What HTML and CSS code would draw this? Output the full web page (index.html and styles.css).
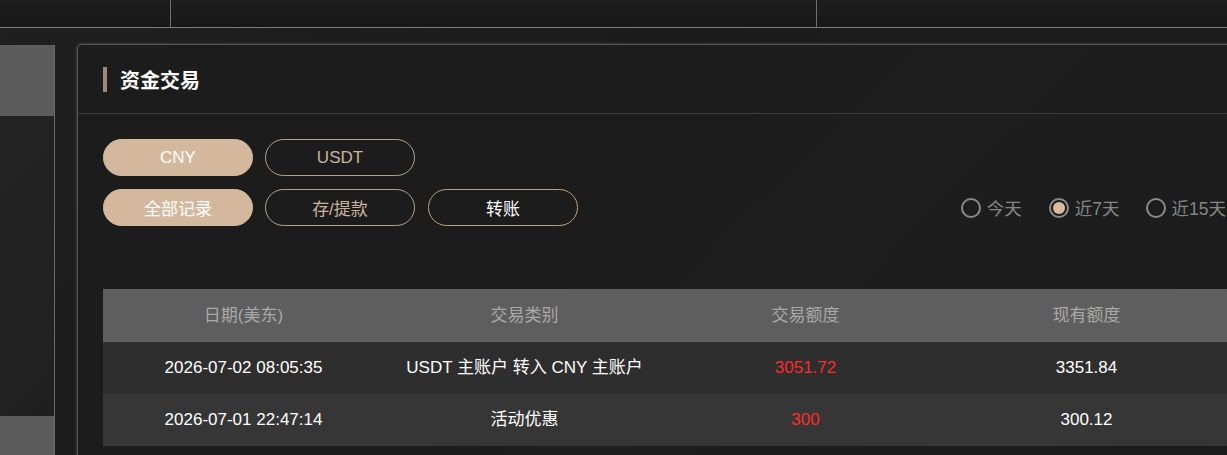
FILE: index.html
```html
<!DOCTYPE html>
<html lang="zh-CN">
<head>
<meta charset="utf-8">
<title>资金交易</title>
<link rel="stylesheet" href="styles.css">
</head>
<body>
<div class="topbar">
  <div class="top-cell top-cell-a"></div>
  <div class="top-cell top-cell-b"></div>
  <div class="top-cell top-cell-c"></div>
</div>
<div class="main">
  <aside class="sidebar">
    <div class="side-block"></div>
    <div class="side-body"></div>
    <div class="side-block side-block-bottom"></div>
  </aside>
  <section class="panel">
    <header class="panel-head">
      <span class="accent"></span>
      <h1 class="panel-title">资金交易</h1>
    </header>
    <div class="panel-body">
      <div class="btn-row">
        <button class="pill pill-active">CNY</button>
        <button class="pill">USDT</button>
      </div>
      <div class="btn-row btn-row-2">
        <div class="pill-group">
          <button class="pill pill-active">全部记录</button>
          <button class="pill">存/提款</button>
          <button class="pill pill-white">转账</button>
        </div>
        <div class="radios">
          <label class="radio"><span class="dot"></span>今天</label>
          <label class="radio radio-on"><span class="dot"></span>近7天</label>
          <label class="radio"><span class="dot"></span>近15天</label>
        </div>
      </div>
      <table class="records">
        <thead>
          <tr><th>日期(美东)</th><th>交易类别</th><th>交易额度</th><th>现有额度</th></tr>
        </thead>
        <tbody>
          <tr><td>2026-07-02 08:05:35</td><td>USDT 主账户 转入 CNY 主账户</td><td class="neg">3051.72</td><td>3351.84</td></tr>
          <tr><td>2026-07-01 22:47:14</td><td>活动优惠</td><td class="neg">300</td><td>300.12</td></tr>
        </tbody>
      </table>
    </div>
  </section>
</div>
</body>
</html>
```
FILE: styles.css
```css
* { box-sizing: border-box; }
html, body { height: 100%; }
body {
  margin: 0;
  background: linear-gradient(135deg, #202020 0%, #1b1b1b 40%, #1c1c1c 100%);
  font-family: "Liberation Sans", "Noto Sans CJK SC", sans-serif;
  color: #fff;
  overflow: hidden;
  width: 1227px;
  height: 455px;
}
.topbar {
  display: flex;
  height: 28px;
  border-bottom: 1px solid #7c7c7c;
  background: linear-gradient(180deg, #1e1e1e, #181818);
}
.top-cell { height: 27px; }
.top-cell-a { width: 171px; border-right: 1px solid #6e6e6e; }
.top-cell-b { width: 646px; border-right: 1px solid #6e6e6e; }
.top-cell-c { flex: 1; }
.main {
  display: flex;
  align-items: flex-start;
}
.sidebar {
  width: 55px;
  margin-top: 17px;
  border-right: 1px solid #6a6a6a;
  display: flex;
  flex-direction: column;
  flex-shrink: 0;
}
.side-block { height: 71px; background: #5c5c5c; }
.side-body { height: 300px; background: linear-gradient(135deg, #232323 0%, #222 70%, #1f1f1f 100%); }
.side-block-bottom { height: 60px; }
.panel {
  margin-left: 22px;
  margin-top: 16px;
  width: 1180px;
  flex-shrink: 0;
  height: 430px;
  border: 1px solid #575757;
  border-radius: 5px;
  background: linear-gradient(135deg, #1c1c1c 0%, #1c1c1c 45%, #1e1e1e 55%, #1b1b1b 100%);
  box-shadow: 0 0 2px 1px rgba(90, 90, 90, 0.45);
}
.panel-head {
  display: flex;
  align-items: center;
  height: 69px;
  padding-left: 25px;
  border-bottom: 1px solid #3c3c3c;
}
.accent {
  width: 4px;
  height: 25px;
  background: #9e8b7b;
  margin-right: 13px;
}
.panel-title {
  margin: 0;
  font-size: 20px;
  font-weight: bold;
  color: #fff;
}
.panel-body { padding: 25px 0 0 25px; }
.btn-row { display: flex; gap: 12px; }
.btn-row-2 {
  margin-top: 13px;
  justify-content: space-between;
  align-items: center;
}
.pill-group { display: flex; gap: 12px; }
.pill-group .pill:last-child { margin-left: 1px; }
.pill {
  width: 150px;
  height: 37px;
  border-radius: 19px;
  border: 1px solid #bba088;
  background: transparent;
  color: #c9b39d;
  font-family: "Liberation Sans", "Noto Sans CJK SC", sans-serif;
  font-size: 17px;
  padding: 0;
}
.pill-active {
  background: #d4b89e;
  border-color: #d4b89e;
  color: #fff;
}
.pill-white { color: #fff; }
.radios {
  display: flex;
  gap: 27px;
  margin-right: 30px;
  white-space: nowrap;
}
.radios .radio:nth-child(3) { margin-left: -1px; }
.radio {
  display: flex;
  align-items: center;
  gap: 6px;
  font-size: 17.5px;
  color: #858585;
}
.dot {
  width: 20px;
  height: 20px;
  border-radius: 50%;
  border: 2px solid #8a8a8a;
  display: flex;
  align-items: center;
  justify-content: center;
}
.radio-on .dot::after {
  content: "";
  width: 12px;
  height: 12px;
  border-radius: 50%;
  background: #dbbb9d;
}
.records {
  margin-top: 63px;
  width: 1124px;
  border-collapse: collapse;
  table-layout: fixed;
  font-size: 17px;
}
.records th, .records td {
  height: 52px;
  text-align: center;
  padding: 0;
  line-height: 20px;
}
.records th {
  background: #5e5e5e;
  color: #a9a9a9;
  font-weight: normal;
  height: 53px;
}
.records tbody tr:nth-child(1) td { background: #2e2e2e; }
.records tbody tr:nth-child(2) td { background: #363636; }
.records td { color: #fff; }
.records td.neg { color: #ff2a2a; }
```
